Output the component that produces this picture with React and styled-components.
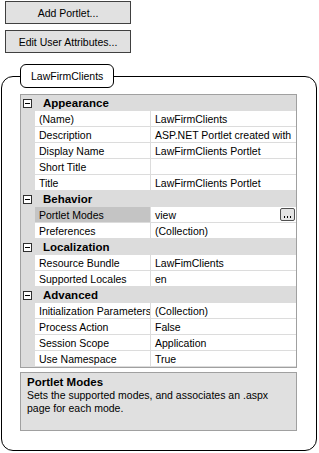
import React from 'react';
import styled, { createGlobalStyle } from 'styled-components';

const GlobalStyle = createGlobalStyle`
  body {
    margin: 0;
    background: #ffffff;
    font-family: "Liberation Sans", Arial, sans-serif;
    font-size: 10.5px;
    color: #000000;
  }
`;

const Page = styled.div`
  display: flex;
  flex-direction: column;
  align-items: flex-start;
  padding: 1px 0 0 1px;
  width: 319px;
  box-sizing: border-box;
`;

const Buttons = styled.div`
  display: flex;
  flex-direction: column;
  gap: 6px;
  padding-left: 4px;
`;

const Button = styled.button`
  width: 126px;
  height: 23px;
  padding: 0;
  border: 1px solid #404040;
  background: #e1e1e1;
  font-family: inherit;
  font-size: 10.5px;
  color: #000000;
`;

const Frame = styled.fieldset`
  width: 316px;
  box-sizing: border-box;
  margin: 11px 0 0 0;
  padding: 6px 19px 19px 18px;
  border: 1px solid #000000;
  border-radius: 12px;
`;

const Legend = styled.legend`
  height: 24px;
  box-sizing: border-box;
  padding: 0 10px;
  border: 1px solid #000000;
  border-radius: 6px;
  background: #ffffff;
  line-height: 22px;
  font-size: 10.5px;
`;

const Grid = styled.div`
  border: 1px solid #a0a0a0;
  background: #dcdcdc;
`;

const CategoryRow = styled.div`
  display: flex;
  align-items: center;
  height: 16px;
  background: #dcdcdc;
`;

const Toggle = styled.span`
  position: relative;
  width: 7px;
  height: 7px;
  margin: 0 11px 0 2px;
  border: 1px solid #303030;
  background: #ffffff;

  &::after {
    content: '';
    position: absolute;
    left: 1px;
    right: 1px;
    top: 3px;
    height: 1px;
    background: #000000;
  }
`;

const CategoryName = styled.span`
  font-weight: bold;
  font-size: 11.5px;
  line-height: 16px;
`;

const Row = styled.div`
  display: flex;
  height: 16px;
`;

const Gutter = styled.div`
  width: 14px;
  flex: none;
`;

const NameCell = styled.div`
  width: 116px;
  flex: none;
  box-sizing: border-box;
  padding-left: 4px;
  border-right: 1px solid #dcdcdc;
  border-bottom: 1px solid #dcdcdc;
  background: ${(p) => (p.selected ? '#c4c4c4' : '#ffffff')};
  line-height: 16px;
  white-space: nowrap;
  overflow: hidden;
`;

const ValueCell = styled.div`
  flex: 1;
  display: flex;
  align-items: center;
  justify-content: space-between;
  box-sizing: border-box;
  padding: 0 0 0 4px;
  border-bottom: 1px solid #dcdcdc;
  background: #ffffff;
  line-height: 16px;
  white-space: nowrap;
  overflow: hidden;
`;

const EllipsisButton = styled.span`
  display: flex;
  align-items: flex-end;
  justify-content: center;
  gap: 2px;
  width: 15px;
  height: 13px;
  box-sizing: border-box;
  padding-bottom: 2px;
  margin-right: 1px;
  border: 1px solid #505050;
  border-radius: 2px;
  background: #e4e4e4;
`;

const Dot = styled.span`
  width: 1px;
  height: 2px;
  background: #000000;
`;

const Help = styled.div`
  margin-top: 4px;
  height: 59px;
  box-sizing: border-box;
  padding: 3px 6px;
  border: 1px solid #a0a0a0;
  background: #e0e0e0;
  line-height: 13px;
`;

const HelpTitle = styled.div`
  font-weight: bold;
  font-size: 11.5px;
`;

const categories = [
  {
    name: 'Appearance',
    rows: [
      ['(Name)', 'LawFirmClients'],
      ['Description', 'ASP.NET Portlet created with'],
      ['Display Name', 'LawFirmClients Portlet'],
      ['Short Title', ''],
      ['Title', 'LawFirmClients Portlet'],
    ],
  },
  {
    name: 'Behavior',
    rows: [
      ['Portlet Modes', 'view', true],
      ['Preferences', '(Collection)'],
    ],
  },
  {
    name: 'Localization',
    rows: [
      ['Resource Bundle', 'LawFimClients'],
      ['Supported Locales', 'en'],
    ],
  },
  {
    name: 'Advanced',
    rows: [
      ['Initialization Parameters', '(Collection)'],
      ['Process Action', 'False'],
      ['Session Scope', 'Application'],
      ['Use Namespace', 'True'],
    ],
  },
];

const App = () => (
  <Page>
    <GlobalStyle />
    <Buttons>
      <Button>Add Portlet...</Button>
      <Button>Edit User Attributes...</Button>
    </Buttons>
    <Frame>
      <Legend>LawFirmClients</Legend>
      <Grid>
        {categories.map((cat) => (
          <React.Fragment key={cat.name}>
            <CategoryRow>
              <Toggle />
              <CategoryName>{cat.name}</CategoryName>
            </CategoryRow>
            {cat.rows.map(([name, value, selected]) => (
              <Row key={name}>
                <Gutter />
                <NameCell selected={selected}>{name}</NameCell>
                <ValueCell>
                  {value}
                  {selected && (
                    <EllipsisButton>
                      <Dot />
                      <Dot />
                      <Dot />
                    </EllipsisButton>
                  )}
                </ValueCell>
              </Row>
            ))}
          </React.Fragment>
        ))}
      </Grid>
      <Help>
        <HelpTitle>Portlet Modes</HelpTitle>
        Sets the supported modes, and associates an .aspx page for each mode.
      </Help>
    </Frame>
  </Page>
);

export default App;
